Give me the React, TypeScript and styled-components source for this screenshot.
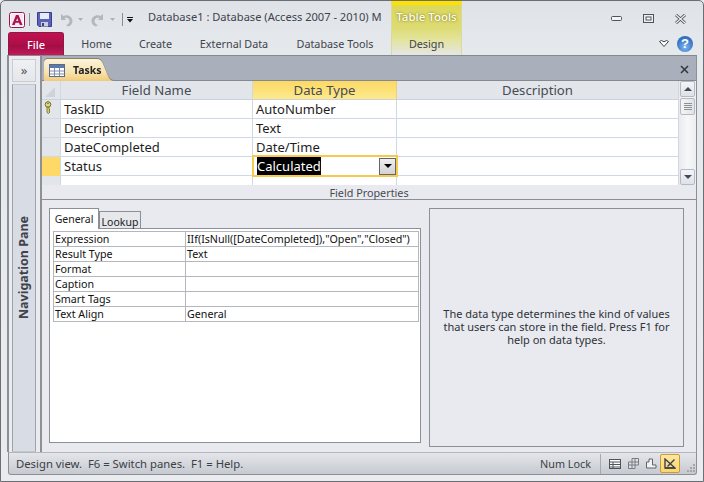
import React from "react";
import styled, { createGlobalStyle } from "styled-components";

const Global = createGlobalStyle`
  html, body { margin: 0; padding: 0; background: #e9ebee; }
  * { box-sizing: border-box; }
  #root { width: 704px; height: 482px; overflow: hidden; }
`;

const FONT = `"Noto Sans", "Open Sans", sans-serif`;

const Win = styled.div`
  width: 704px; height: 482px;
  border: 1px solid #6b6f75;
  border-radius: 5px 5px 0 0;
  background: linear-gradient(#dfe3e8 0, #e6e9ec 54px, #e9ebee 100%);
  font-family: ${FONT};
  display: flex; flex-direction: column;
  padding: 0 6px 6px 6px;
  color: #3b3f46;
`;
const Top = styled.div`
  height: 54px; display: flex; margin: 0 -5px 0 1px; flex: none;
`;
const LeftTop = styled.div`
  width: 383px; display: flex; flex-direction: column; flex: none;
`;
const TitleRow = styled.div`
  height: 31px; display: flex; align-items: center; padding: 6px 0 0 1px;
`;
const Title = styled.div`
  font-size: 11.1px; color: #3e434c; white-space: nowrap; margin: -7px 0 0 14px;
`;
const QatSep = styled.div<{ $l: number; $r: number }>`
  width: 1px; height: 13px; background: #8a8e94; margin: 0 ${p => p.$r}px 0 ${p => p.$l}px; flex: none;
`;
const QatIcon = styled.svg<{ $ml?: number; $flip?: boolean }>`
  flex: none; margin-left: ${p => p.$ml ?? 0}px; display: block;
  ${p => p.$flip ? "transform: scaleX(-1);" : ""}
`;
const Tabs = styled.div`
  height: 23px; display: flex; align-items: stretch;
`;
const FileTab = styled.div`
  width: 56px; flex: none;
  background: linear-gradient(#c2104f 0, #b00f4a 45%, #a30e44 60%, #c31a5b 100%);
  border: 1px solid #8d1a43; border-bottom: none;
  border-radius: 3px 3px 0 0;
  color: #fff; font-size: 11px; font-weight: 500;
  display: flex; align-items: center; justify-content: center;
`;
const RibbonTab = styled.div<{ $w: number }>`
  width: ${p => p.$w}px; flex: none; font-size: 10.8px; color: #3e434c;
  display: flex; align-items: center; justify-content: center;
`;
const Context = styled.div`
  width: 71px; flex: none; display: flex; flex-direction: column; align-items: center;
  border-left: 1px solid #d9d9a0; border-right: 1px solid #d9d9a0;
  border-top: 4px solid #ffe100;
  background: linear-gradient(#dcd85a 0, #dddb72 22px, #e3e39a 34px, #e4e7ea 51px);
`;
const ContextTitle = styled.div`
  height: 27px; font-size: 11.5px; color: #fff; font-weight: 500; line-height: 24px;
  text-shadow: 0 0 3px #8d8a20, 0 0 1px #8d8a20;
`;
const ContextTab = styled.div`
  height: 23px; font-size: 10.8px; color: #3e434c; line-height: 23px;
`;
const RightTop = styled.div`
  flex: 1; display: flex; flex-direction: column; align-items: flex-end;
`;
const WinCtrl = styled.div`
  height: 31px; display: flex; align-items: center; gap: 21px; padding: 4px 16px 0 0;
`;
const HelpRow = styled.div`
  height: 23px; display: flex; align-items: center; gap: 8px; padding-right: 9px;
`;
const HelpBall = styled.div`
  width: 16px; height: 16px; border-radius: 50%;
  background: radial-gradient(circle at 50% 70%, #7fb6ee 0, #3a78c8 60%, #2a5ea8 100%);
  color: #fff; font-size: 13px; font-weight: 700; line-height: 16px; text-align: center;
  font-family: "Liberation Sans", sans-serif;
`;

const Body = styled.div`
  flex: 1; min-height: 0; display: flex;
  border-top: 1px solid #85898f; border-left: 2px solid #8c9096; border-right: 1px solid #8c9096;
`;
const Nav = styled.div`
  width: 33px; flex: none; background: #e9ebee; padding: 3px 4px 0 3px;
  display: flex; flex-direction: column; gap: 2px;
  border-right: 2px solid #8d9197;
`;
const NavBtn = styled.div`
  height: 23px; background: linear-gradient(#f0f1f3, #e4e6ea); border: 1px solid #c9ccd1;
  display: flex; align-items: center; justify-content: center; font-size: 13px; line-height: 1; color: #555;
`;
const NavPane = styled.div`
  height: 368px; background: #d8dce4; border: 1px solid #c3c7cd; border-left-color: #9fa3a9; border-right-color: #9fa3a9;
  display: flex; align-items: center; justify-content: center;
`;
const NavLabel = styled.div`
  transform: rotate(-90deg); white-space: nowrap; font-size: 12.5px; font-weight: 700; color: #3f4249;
  margin-bottom: 2px;
`;
const Doc = styled.div`
  flex: 1; min-width: 0; display: flex; flex-direction: column; background: #e8eaef;
`;
const DocTabs = styled.div`
  height: 25px; flex: none; background: #a9b0bc; border-bottom: 1px solid #848890;
  display: flex; align-items: flex-end; justify-content: space-between; padding: 0 7px 0 2px;
`;
const DocTabEdge = styled.div`
  margin-bottom: -1px; filter: drop-shadow(0 -0.5px 0.5px #8f7f5a);
`;
const DocTab = styled.div`
  width: 70px; height: 22px;
  background: linear-gradient(#fbf3dc 0, #f7e3b0 60%, #f3c97a 100%);
  clip-path: path("M0 22 V4 Q0 0 4 0 H53 Q57 0 59 5 L64 17 Q66 22 70 22 Z");
  display: flex; align-items: center; padding-left: 5px; gap: 8px;
  font-size: 10.5px; font-weight: 700; color: #222;
`;
const CloseX = styled.svg`
  margin-bottom: 6px; display: block;
`;
const GridWrap = styled.div`
  flex: none; height: 104px; display: flex; background: #fff;
`;
const Table = styled.div`
  width: 637px; flex: none; display: grid;
  grid-template-columns: 19px 192px 144px 282px;
  grid-template-rows: 19px 19px 19px 19px 19px 9px;
`;
const HeadCell = styled.div<{ $active?: boolean }>`
  background: ${p => p.$active ? "linear-gradient(#fcd965, #fde98d)" : "#e2e6eb"};
  border-right: 1px solid ${p => p.$active ? "#e3cf85" : "#d0d7e5"};
  border-bottom: 1px solid #ccd2dc;
  display: flex; align-items: center; justify-content: center;
  font-size: 13.2px; color: #474b53; position: relative;
`;
const Corner = styled.div`
  position: absolute; left: 3px; bottom: 2px; width: 0; height: 0;
  border-left: 10px solid transparent; border-bottom: 10px solid #d0d4da;
`;
const Selector = styled.div<{ $active?: boolean; $last?: boolean }>`
  background: ${p => p.$active ? "#ffd966" : "#e2e6eb"};
  border-right: 1px solid #d0d7e5;
  border-bottom: ${p => p.$last ? "none" : `1px solid ${p.$active ? "#ffd966" : "#d0d7e5"}`};
  padding: 1px 0 0 2px;
`;
const Cell = styled.div<{ $last?: boolean }>`
  border-right: 1px solid #d0d7e5; border-bottom: ${p => p.$last ? "none" : "1px solid #d0d7e5"};
  font-size: 13px; color: #1e1e1e; padding: 0 3px; line-height: 18px; white-space: nowrap;
`;
const ActiveCell = styled.div`
  position: relative; z-index: 1; margin: -2px -1px -1px -1px;
  border: 2px solid #f6c94f; display: flex; align-items: center; justify-content: space-between;
  padding: 0 0 0 3px; background: #fff;
`;
const Sel = styled.span`
  background: #000; color: #fff; font-size: 13px; height: 18px; line-height: 18px; display: block;
`;
const Drop = styled.div`
  width: 17px; height: 17px; border: 1px solid #666; background: linear-gradient(#eee, #d2d2d2);
  display: flex; align-items: center; justify-content: center;
`;
const Arrow = styled.div<{ $up?: boolean; $c?: string }>`
  width: 0; height: 0; border-left: 4px solid transparent; border-right: 4px solid transparent;
  ${p => p.$up ? `border-bottom: 4px solid ${p.$c ?? "#000"};` : `border-top: 4px solid ${p.$c ?? "#000"};`}
`;
const Scroll = styled.div`
  flex: 1; background: linear-gradient(90deg, #e8eaee, #f6f7f8 50%, #eceef1); display: flex; flex-direction: column;
  padding: 0 1px;
`;
const ScrollBtn = styled.div`
  height: 16px; flex: none; border: 1px solid #b6bac0; border-radius: 2px;
  background: linear-gradient(#f4f5f6, #dfe1e5);
  display: flex; align-items: center; justify-content: center;
`;
const Thumb = styled.div`
  height: 17px; flex: none; margin-top: 1px; border: 1px solid #b6bac0; border-radius: 2px;
  background: linear-gradient(90deg, #f3f4f5, #e1e3e6);
  display: flex; flex-direction: column; align-items: center; justify-content: center; gap: 1px;
`;
const Grip = styled.div` width: 8px; height: 1px; background: #8d9197; `;
const Spacer = styled.div` flex: 1; `;
const FieldBar = styled.div`
  flex: none; height: 15px; border-bottom: 1px solid #8c9096;
  font-size: 10.8px; color: #474b53; text-align: center; line-height: 16px;
`;
const Lower = styled.div`
  flex: 1; min-height: 0; display: flex; padding: 8px 12px 5px 7px; gap: 8px;
`;
const PropsCol = styled.div`
  width: 372px; flex: none; display: flex; flex-direction: column; padding-bottom: 4px;
`;
const PropTabs = styled.div`
  height: 21px; flex: none; display: flex; align-items: flex-end; margin-bottom: -1px; position: relative; z-index: 1;
`;
const PTab = styled.div<{ $on?: boolean }>`
  width: ${p => p.$on ? 50 : 42}px; height: ${p => p.$on ? 21 : 18}px;
  border: 1px solid #8c9096; border-bottom: ${p => p.$on ? "none" : "1px solid #8c9096"};
  background: ${p => p.$on ? "#fff" : "#e6e8ec"};
  font-size: 10.5px; color: #222; text-align: center; line-height: ${p => p.$on ? 21 : 20}px;
`;
const PropPanel = styled.div`
  flex: 1; background: #fff; border: 1px solid #8c9096; padding: 2px 2px 0 3px;
`;
const PropTable = styled.div`
  display: grid; grid-template-columns: 132px 233px; border: 1px solid #b4b8be; border-bottom: none; border-right: none;
  width: 366px;
`;
const PCell = styled.div`
  height: 15px; border-right: 1px solid #b4b8be; border-bottom: 1px solid #b4b8be;
  font-size: 10.7px; color: #111; padding-left: 1px; line-height: 15px; white-space: nowrap; overflow: hidden;
`;
const HelpBox = styled.div`
  width: 255px; flex: none; border: 1px solid #8c9096; background: #e8eaef;
  display: flex; align-items: center; justify-content: center; text-align: center;
  font-size: 11px; line-height: 13px; color: #2f3238; padding: 0 8px;
`;
const HelpText = styled.div` margin-top: -2px; `;
const Status = styled.div`
  height: 23px; flex: none; display: flex; align-items: center; margin-left: 1px;
  border: 1px solid #8c9096; border-top: 1px solid #b3b6ba; border-radius: 0 0 3px 3px;
  background: linear-gradient(#e3e5e9 0, #d5d8dd 50%, #c6c9cf 100%);
  font-size: 11.3px; color: #3b3f46; padding-left: 7px;
`;
const StatusText = styled.div` width: 524px; flex: none; white-space: pre; `;
const NumLock = styled.div` width: 60px; flex: none; font-size: 10.8px; `;
const VSep = styled.div` width: 1px; height: 20px; background: #a6a9ae; flex: none; `;
const StatusIcons = styled.div` display: flex; align-items: center; gap: 7px; margin-left: 8px; `;
const ActiveView = styled.div`
  width: 20px; height: 19px; border: 1px solid #c79a3a; border-radius: 2px; margin-left: -4px;
  background: linear-gradient(#fde7a0, #fcd56c);
  display: flex; align-items: center; justify-content: center;
`;
const ResizeGrip = styled.svg` margin: 8px 0 0 6px; display: block; flex: none; `;

const AccessLogo = () => (
  <QatIcon width="16" height="16" viewBox="0 0 16 16">
    <rect x="0.5" y="0.5" width="15" height="15" rx="2" fill="#fff" stroke="#a01348" />
    <rect x="2" y="2" width="12" height="12" fill="#f6e8ee" />
    <path d="M3 13 L7 3 H9.5 L13.5 13 H10.8 L10 10.8 H6.5 L5.7 13 Z M7.2 9 H9.3 L8.2 6 Z" fill="#a8144e" fillRule="evenodd" />
  </QatIcon>
);
const Save = () => (
  <QatIcon width="15" height="15" viewBox="0 0 15 15">
    <path d="M0.5 0.5 H14.5 V14.5 H2 L0.5 13 Z" fill="#5a62b8" stroke="#3a3f86" />
    <rect x="3" y="1" width="9" height="6" fill="#e6ecfa" />
    <rect x="4" y="10" width="7" height="4.5" fill="#c9cede" />
    <rect x="5" y="11" width="2" height="3" fill="#3a4290" />
  </QatIcon>
);
const Undo = ({ flip, ml }: { flip?: boolean; ml: number }) => (
  <QatIcon $flip={flip} $ml={ml} width="13" height="14" viewBox="0 0 13 14">
    <path d="M1 1 V7 H6 L4.5 5 C7 4 9.5 5.5 9.5 8 C9.5 10 8 11.5 6 12 L8 13.5 C11 13 12.5 10.5 12.5 8 C12.5 4 8 1 3.5 3 Z" fill="#b4b8bd" />
  </QatIcon>
);
const Caret = ({ ml }: { ml: number }) => (
  <QatIcon $ml={ml} width="5" height="3" viewBox="0 0 5 3"><path d="M0 0 H5 L2.5 3 Z" fill="#aeb2b8" /></QatIcon>
);
const TableIco = () => (
  <QatIcon width="16" height="13" viewBox="0 0 16 13">
    <rect x="0.5" y="0.5" width="15" height="12" fill="#fff" stroke="#5c6a8a" />
    <rect x="1" y="1" width="14" height="3" fill="#5f79ad" />
    <path d="M1 7 H15 M1 10 H15 M5.5 4 V12 M10.5 4 V12" stroke="#7f8fb0" />
  </QatIcon>
);
const Key = () => (
  <QatIcon width="9" height="13" viewBox="0 0 9 13">
    <circle cx="4" cy="3.5" r="2.8" fill="#e4dc78" stroke="#6d6a2a" />
    <circle cx="4" cy="2.5" r="0.8" fill="#6d6a2a" />
    <path d="M3 6 V11.5 L4.5 12.5 L6 11 L5 10 L6 9 L5 8 V6 Z" fill="#d6cf62" stroke="#6d6a2a" strokeWidth="0.8" />
  </QatIcon>
);

export default function App() {
  const rows = [["TaskID", "AutoNumber"], ["Description", "Text"], ["DateCompleted", "Date/Time"]];
  const props = [
    ["Expression", 'IIf(IsNull([DateCompleted]),"Open","Closed")'],
    ["Result Type", "Text"], ["Format", ""], ["Caption", ""], ["Smart Tags", ""], ["Text Align", "General"],
  ];
  return (
    <Win>
      <Global />
      <Top>
        <LeftTop>
          <TitleRow>
            <AccessLogo />
            <QatSep $l={4} $r={7} />
            <Save />
            <Undo ml={8} />
            <Caret ml={5} />
            <Undo flip ml={8} />
            <Caret ml={6} />
            <QatSep $l={7} $r={4} />
            <QatIcon width="7" height="6" viewBox="0 0 7 6"><path d="M0 0 H6 V1 H0 Z M0 2 H6 L3 5.5 Z" fill="#111" /></QatIcon>
            <Title>Database1 : Database (Access 2007 - 2010) M</Title>
          </TitleRow>
          <Tabs>
            <FileTab>File</FileTab>
            <RibbonTab $w={65}>Home</RibbonTab>
            <RibbonTab $w={53}>Create</RibbonTab>
            <RibbonTab $w={104}>External Data</RibbonTab>
            <RibbonTab $w={98}>Database Tools</RibbonTab>
          </Tabs>
        </LeftTop>
        <Context>
          <ContextTitle>Table Tools</ContextTitle>
          <ContextTab>Design</ContextTab>
        </Context>
        <RightTop>
          <WinCtrl>
            <svg width="11" height="5" viewBox="0 0 11 5"><rect x="0.5" y="0.5" width="10" height="4" rx="1" fill="#f4f5f6" stroke="#4f545b" /></svg>
            <svg width="11" height="9" viewBox="0 0 11 9"><rect x="0.5" y="0.5" width="10" height="8" fill="#eef0f2" stroke="#4f545b" /><rect x="3" y="3" width="5" height="3" fill="#fff" stroke="#4f545b" /></svg>
            <svg width="11" height="10" viewBox="0 0 11 10"><path d="M1 1 L10 9 M10 1 L1 9" stroke="#4f545b" strokeWidth="3" /><path d="M1 1 L10 9 M10 1 L1 9" stroke="#eef0f2" strokeWidth="1.2" /></svg>
          </WinCtrl>
          <HelpRow>
            <svg width="10" height="7" viewBox="0 0 10 7"><path d="M0.5 1.5 L2.5 0.5 L5 1.8 L7.5 0.5 L9.5 1.5 L5 6.5 Z" fill="#fff" stroke="#444" /></svg>
            <HelpBall>?</HelpBall>
          </HelpRow>
        </RightTop>
      </Top>
      <Body>
        <Nav>
          <NavBtn>»</NavBtn>
          <NavPane><NavLabel>Navigation Pane</NavLabel></NavPane>
        </Nav>
        <Doc>
          <DocTabs>
            <DocTabEdge><DocTab><TableIco />Tasks</DocTab></DocTabEdge>
            <CloseX width="9" height="9" viewBox="0 0 9 9"><path d="M1 1 L8 8 M8 1 L1 8" stroke="#33363b" strokeWidth="1.5" /></CloseX>
          </DocTabs>
          <GridWrap>
            <Table>
              <HeadCell><Corner /></HeadCell>
              <HeadCell>Field Name</HeadCell>
              <HeadCell $active>Data Type</HeadCell>
              <HeadCell>Description</HeadCell>
              {rows.map((r, i) => (
                <React.Fragment key={r[0]}>
                  <Selector>{i === 0 ? <Key /> : null}</Selector>
                  <Cell>{r[0]}</Cell>
                  <Cell>{r[1]}</Cell>
                  <Cell />
                </React.Fragment>
              ))}
              <Selector $active />
              <Cell>Status</Cell>
              <ActiveCell><Sel>Calculated</Sel><Drop><Arrow /></Drop></ActiveCell>
              <Cell />
              <Selector $last />
              <Cell $last />
              <Cell $last />
              <Cell $last />
            </Table>
            <Scroll>
              <ScrollBtn><Arrow $up $c="#3f4a6b" /></ScrollBtn>
              <Thumb><Grip /><Grip /><Grip /><Grip /></Thumb>
              <Spacer />
              <ScrollBtn><Arrow $c="#3f4a6b" /></ScrollBtn>
            </Scroll>
          </GridWrap>
          <FieldBar>Field Properties</FieldBar>
          <Lower>
            <PropsCol>
              <PropTabs>
                <PTab $on>General</PTab>
                <PTab>Lookup</PTab>
              </PropTabs>
              <PropPanel>
                <PropTable>
                  {props.map(p => (
                    <React.Fragment key={p[0]}>
                      <PCell>{p[0]}</PCell>
                      <PCell>{p[1]}</PCell>
                    </React.Fragment>
                  ))}
                </PropTable>
              </PropPanel>
            </PropsCol>
            <HelpBox><HelpText>The data type determines the kind of values that users can store in the field. Press F1 for help on data types.</HelpText></HelpBox>
          </Lower>
        </Doc>
      </Body>
      <Status>
        <StatusText>Design view.  F6 = Switch panes.  F1 = Help.</StatusText>
        <NumLock>Num Lock</NumLock>
        <VSep />
        <StatusIcons>
          <svg width="12" height="10" viewBox="0 0 12 10"><rect x="0.5" y="0.5" width="11" height="9" fill="#fff" stroke="#50545a" /><path d="M1 3 H11 M1 5.5 H11 M1 8 H11 M4 3 V9" stroke="#50545a" /></svg>
          <svg width="11" height="11" viewBox="0 0 11 11"><path d="M4 .5 H10.5 V7 H7 V10.5 H.5 V4 H4 Z" fill="#dfe1e4" stroke="#777b81" /><path d="M4 4 H10 M4 4 V10 M7 1 V7 M1 7 H7" stroke="#777b81" /></svg>
          <svg width="11" height="11" viewBox="0 0 11 11"><path d="M3 1 H6.5 V7 H10 V10 H.5 V4 H3 Z" fill="#f2f3f4" stroke="#60646a" /></svg>
          <ActiveView>
            <svg width="12" height="11" viewBox="0 0 12 11"><path d="M1 1 V10 H11 Z" fill="none" stroke="#3d4450" strokeWidth="1.4" /><path d="M3 8 L10 1 L11 2 L4 9 Z" fill="#3d4450" /><path d="M1 10 H11" stroke="#3d4450" strokeWidth="1.5" /></svg>
          </ActiveView>
        </StatusIcons>
        <ResizeGrip width="9" height="9" viewBox="0 0 9 9"><path d="M7 1h2v2H7zM4 4h2v2H4zM7 4h2v2H7zM1 7h2v2H1zM4 7h2v2H4zM7 7h2v2H7z" fill="#a2a6ac" /></ResizeGrip>
      </Status>
    </Win>
  );
}
